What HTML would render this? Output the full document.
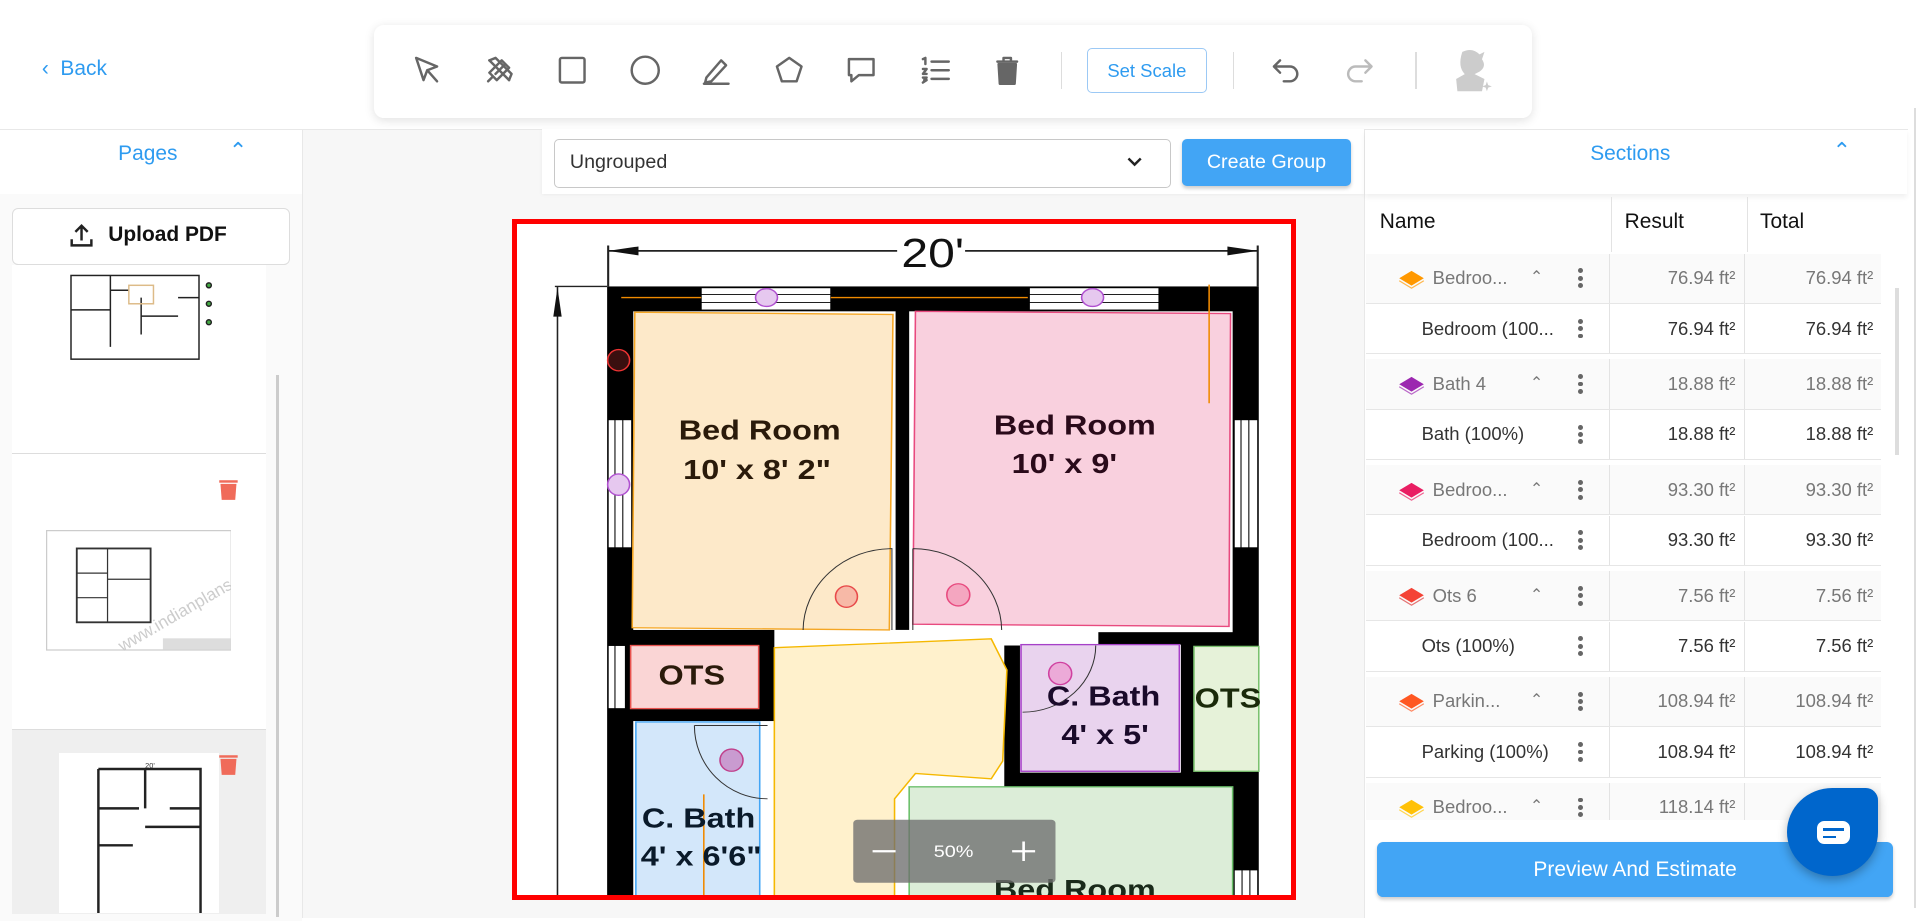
<!DOCTYPE html>
<html><head><meta charset="utf-8">
<style>
html{zoom:1.2308}
body{margin:0;width:1560px;height:735px;overflow:hidden;background:#fff;font-family:"Liberation Sans",sans-serif;position:relative}
.a{position:absolute}
.blue{color:#2e9bf0}
.ic{position:absolute;top:43px;width:28px;height:28px}
.ic svg{width:28px;height:28px;fill:none;stroke:#666;stroke-width:2;stroke-linecap:round;stroke-linejoin:round}
.row{position:absolute;left:1112px;width:418px;height:40px;font-size:15px;color:#333;border-bottom:1px solid #e6e6e6}
.row.g{background:#fafafa;color:#777}
.row .n{position:absolute;top:11px}
.row .r{position:absolute;right:118px;top:11px}
.row .t{position:absolute;right:6px;top:11px}
.row .c1{position:absolute;left:197px;top:0;height:40px;border-left:1px solid #e3e3e3}
.row .c2{position:absolute;left:307px;top:0;height:40px;border-left:1px solid #e3e3e3}
.dots{position:absolute;left:172px;top:12px;width:4px}
.dots i{display:block;width:4px;height:4px;border-radius:2px;background:#666;margin-bottom:2px}
.chev{position:absolute;left:133px;top:11px;font-size:13px;color:#777}
.lay{position:absolute;left:26px;top:10px;width:22px;height:20px}
</style></head><body>

<div class="a blue" style="left:34px;top:46px;font-size:17px">&#8249;&nbsp; Back</div>
<div class="a" style="left:304px;top:20px;width:941px;height:76px;background:#fff;border-radius:8px;box-shadow:0 2px 8px rgba(0,0,0,.12)"></div>
<div class="ic" style="left:333px"><svg viewBox="0 0 28 28"><path d="M5 4 L22 11 L14 14 L11 22 Z M14 14 L22 23"/></svg></div>
<div class="ic" style="left:392px"><svg viewBox="0 0 28 28"><path d="M6 16 L16 6 L22 12 L12 22 Z M9 19 L5 23 M18 10 L11 17 M6 6 L22 22"/><path d="M6 6 L11 4 L24 17 L22 22"/></svg></div>
<div class="ic" style="left:451px"><svg viewBox="0 0 28 28"><rect x="4" y="4" width="20" height="20" rx="1.5"/></svg></div>
<div class="ic" style="left:510px"><svg viewBox="0 0 28 28"><circle cx="14" cy="14" r="11"/></svg></div>
<div class="ic" style="left:568px"><svg viewBox="0 0 28 28"><path d="M6 20 L18 6 L22 10 L10 23 L5 24 Z M4 25 H24"/></svg></div>
<div class="ic" style="left:627px"><svg viewBox="0 0 28 28"><path d="M14 4 L24 11 L20 23 H8 L4 11 Z"/></svg></div>
<div class="ic" style="left:686px"><svg viewBox="0 0 28 28"><path d="M4 5 H24 V18 H12 L6 23 V18 H4 Z"/></svg></div>
<div class="ic" style="left:746px"><svg viewBox="0 0 28 28"><path d="M11 7 H25 M11 14 H25 M11 21 H25 M4 5 L6 4 V9 M4 13 H7 L4 17 H7 M4 20 H7 L5 22 H7 L4 24"/></svg></div>
<div class="ic" style="left:804px"><svg viewBox="0 0 28 28"><path d="M6 7 H22 M11 7 V4 H17 V7" /><path d="M7 9 H21 L20 25 H8 Z" fill="#666"/></svg></div>
<div class="a" style="left:862px;top:42px;width:1px;height:30px;background:#ddd"></div>
<div class="a blue" style="left:883px;top:39px;width:96px;height:35px;border:1px solid #9cc9f5;border-radius:4px;font-size:15px;text-align:center;line-height:35px">Set Scale</div>
<div class="a" style="left:1002px;top:42px;width:1px;height:30px;background:#ddd"></div>
<div class="ic" style="left:1031px"><svg viewBox="0 0 28 28"><path d="M9 6 L4 11 L9 16 M4 11 H17 A6 6 0 0 1 17 23 H12"/></svg></div>
<div class="ic" style="left:1090px"><svg viewBox="0 0 28 28" style="stroke:#bbb"><path d="M19 6 L24 11 L19 16 M24 11 H11 A6 6 0 0 0 11 23 H16"/></svg></div>
<div class="a" style="left:1150px;top:42px;width:1px;height:30px;background:#ddd"></div>
<svg class="a" style="left:1178px;top:38px" width="36" height="38" viewBox="0 0 36 38"><path d="M10 4 Q18 0 24 6 L28 4 L26 10 Q30 16 24 20 L20 22 L28 26 L26 36 H6 L5 26 L12 22 Q6 16 10 4Z" fill="#ccc"/><path d="M30 28 l1 3 3 1 -3 1 -1 3 -1 -3 -3 -1 3 -1z" fill="#ccc"/></svg>

<div class="a" style="left:0;top:105px;width:1550px;height:1px;background:#e8e8e8"></div>
<div class="a" style="left:1555px;top:88px;width:2px;height:650px;background:#ddd"></div>

<div class="a" style="left:0;top:106px;width:245px;height:52px;background:#fff;box-shadow:0 3px 4px rgba(0,0,0,.06)"></div>
<div class="a blue" style="left:96px;top:115px;font-size:17px">Pages</div>
<div class="a blue" style="left:186px;top:112px;font-size:18px">&#8963;</div>
<div class="a" style="left:245px;top:106px;width:1px;height:640px;background:#e8e8e8"></div>
<div class="a" style="left:0;top:158px;width:245px;height:590px;background:#fafafa"></div>
<div class="a" style="left:10px;top:169px;width:224px;height:45px;background:#fff;border:1px solid #ddd;border-radius:5px"></div>
<svg class="a" style="left:55px;top:180px" width="22" height="22" viewBox="0 0 22 22" fill="none" stroke="#222" stroke-width="2"><path d="M11 15 V3 M6 8 L11 3 L16 8 M3 14 V19 H19 V14"/></svg>
<div class="a" style="left:88px;top:181px;font-size:17px;font-weight:bold;color:#111">Upload PDF</div>
<div class="a" style="left:10px;top:215px;width:206px;height:525px;background:#fff"></div>
<div class="a" style="left:224px;top:305px;width:3px;height:440px;background:#ccc"></div>
<svg class="a" style="left:45px;top:222px" width="135" height="74" viewBox="0 0 135 74" fill="none" stroke="#222" stroke-width="1.2"><rect x="13" y="2" width="104" height="68"/><path d="M13 30 H45 M45 2 V60 M45 14 H60 M70 20 V50 M100 20 H117 M70 35 H100"/><circle cx="125" cy="10" r="2" fill="#4a4"/><circle cx="125" cy="25" r="2" fill="#4a4"/><circle cx="125" cy="40" r="2" fill="#4a4"/><rect x="60" y="10" width="20" height="15" stroke="#db8"/></svg>
<div class="a" style="left:10px;top:368px;width:206px;height:1px;background:#ddd"></div>
<svg class="a" style="left:177px;top:389px" width="17" height="18" viewBox="0 0 17 18"><rect x="1" y="1" width="15" height="2" fill="#f06b5a"/><path d="M2 4 H15 L14 17 H3Z" fill="#f06b5a"/></svg>
<svg class="a" style="left:37px;top:431px" width="151" height="98" viewBox="0 0 151 98" fill="none" stroke="#333" stroke-width="1"><rect x=".5" y=".5" width="150" height="97" stroke="#ccc"/><rect x="25" y="15" width="60" height="60" stroke-width="1.5"/><path d="M25 35 H50 M50 15 V75 M25 55 H50 M50 40 H85"/><text x="45" y="85" font-size="14" fill="#ccc" stroke="none" transform="rotate(-30 80 60)">www.indianplans.in</text><rect x="95" y="88" width="55" height="9" fill="#ddd" stroke="none"/></svg>
<div class="a" style="left:10px;top:592px;width:206px;height:150px;background:#efefef;border-top:1px solid #ddd"></div>
<div class="a" style="left:48px;top:612px;width:130px;height:130px;background:#fff"></div>
<svg class="a" style="left:48px;top:612px" width="130" height="130" viewBox="0 0 130 130" fill="none" stroke="#222" stroke-width="2"><path d="M32 13 H115 V130 M32 13 V130 M32 45 H65 M70 13 V45 M90 45 H115 M70 60 H115 M32 75 H60"/><text x="70" y="12" font-size="6" fill="#333" stroke="none">20'</text></svg>
<svg class="a" style="left:177px;top:613px" width="17" height="18" viewBox="0 0 17 18"><rect x="1" y="1" width="15" height="2" fill="#f06b5a"/><path d="M2 4 H15 L14 17 H3Z" fill="#f06b5a"/></svg>

<div class="a" style="left:246px;top:106px;width:862px;height:640px;background:#f7f7f7"></div>
<div class="a" style="left:440px;top:105px;width:668px;height:53px;background:#fff;box-shadow:0 1px 3px rgba(0,0,0,.06)"></div>
<div class="a" style="left:450px;top:113px;width:500px;height:38px;border:1px solid #c8c8c8;border-radius:4px;background:#fff"></div>
<div class="a" style="left:463px;top:123px;font-size:16px;color:#333">Ungrouped</div>
<svg class="a" style="left:915px;top:127px" width="14" height="10" viewBox="0 0 14 10" fill="none" stroke="#222" stroke-width="2"><path d="M2 2 L7 7 L12 2"/></svg>
<div class="a" style="left:960px;top:113px;width:138px;height:38px;background:#42a5f5;border-radius:4px;color:#fff;font-size:16px;text-align:center;line-height:38px;box-shadow:0 2px 3px rgba(0,0,0,.2)">Create Group</div>

<div class="a" style="left:416px;top:178px;width:637px;height:553px;background:#fff;overflow:hidden">
<svg class="a" style="left:-9.75px;top:-7.4px" width="658.1" height="564.7" viewBox="0 0 1550 1564" preserveAspectRatio="none" font-family="Liberation Sans, sans-serif">
<path d="M207 92 H760 M890 92 H1450 M207 80 V172 M1450 80 V172" stroke="#222" stroke-width="4" fill="none"/>
<path d="M207 92 L265 82 L265 102Z M1450 92 L1392 82 L1392 102Z" fill="#111"/>
<text x="828" y="128" font-size="92" text-anchor="middle" fill="#111">20'</text>
<path d="M105 172 H205 M110 172 V1600" stroke="#222" stroke-width="3"/>
<path d="M110 175 L102 240 L118 240Z" fill="#111"/>
<rect x="205" y="172" width="1247" height="1450" fill="#000"/>
<g fill="#fff" stroke="#000" stroke-width="2">
<rect x="385" y="175" width="248" height="50"/><rect x="1013" y="175" width="248" height="50"/>
<rect x="207" y="472" width="45" height="288"/><rect x="1405" y="472" width="45" height="288"/>
<rect x="207" y="980" width="33" height="142"/><rect x="1405" y="1485" width="45" height="100"/>
</g>
<path d="M385 190 H633 M385 208 H633 M1013 190 H1261 M1013 208 H1261" stroke="#000" stroke-width="2"/>
<path d="M220 472 V760 M235 472 V760 M1418 472 V760 M1433 472 V760 M220 980 V1122 M1420 1485 V1590 M1435 1485 V1590" stroke="#000" stroke-width="2"/>
<rect x="255" y="228" width="502" height="717" fill="#fff"/>
<rect x="783" y="228" width="619" height="722" fill="#fff"/>
<rect x="525" y="945" width="440" height="640" fill="#fff"/>
<rect x="580" y="945" width="565" height="35" fill="#fff"/>
<rect x="255" y="1150" width="270" height="440" fill="#fff"/>
<rect x="995" y="978" width="308" height="288" fill="#fff"/>
<rect x="783" y="1298" width="619" height="290" fill="#fff"/>
<polygon points="258,230 752,235 745,945 253,940" fill="#fde9c9" stroke="#f5a623" stroke-width="3"/>
<polygon points="795,228 1398,233 1395,937 790,932" fill="#f9d0de" stroke="#e84a7f" stroke-width="3"/>
<rect x="250" y="980" width="245" height="142" fill="#fad5d5" stroke="#e8534f" stroke-width="3"/>
<polygon points="525,985 940,965 970,1035 962,1240 940,1280 795,1268 755,1325 755,1600 525,1600" fill="#fff1cc" stroke="#f5b800" stroke-width="3"/>
<rect x="997" y="978" width="303" height="285" fill="#e9d3ee" stroke="#a640c8" stroke-width="3"/>
<rect x="1328" y="982" width="124" height="281" fill="#e6f2d9" stroke="#7bc26f" stroke-width="3"/>
<rect x="783" y="1298" width="619" height="300" fill="#dcedd8" stroke="#6abf69" stroke-width="3"/>
<rect x="260" y="1152" width="237" height="450" fill="#d3e7fa" stroke="#42a5f5" stroke-width="3"/>
<g fill="none" stroke="#333" stroke-width="2">
<path d="M580 945 A170 185 0 0 1 750 762 V945"/><path d="M790 762 A170 185 0 0 1 960 945 M790 762 V945"/>
<path d="M1000 1130 A140 150 0 0 0 1140 980"/><path d="M372 1160 A140 165 0 0 0 512 1325 M372 1160 H512"/>
</g>
<path d="M232 197 H385 M633 197 H1010 M1357 168 V435 M390 1315 V1600" stroke="#f08a00" stroke-width="3"/>
<g stroke-width="3">
<ellipse cx="510" cy="197" rx="21" ry="20" fill="#e6c8ef" stroke="#b050d0"/><ellipse cx="1134" cy="197" rx="21" ry="20" fill="#e6c8ef" stroke="#b050d0"/>
<ellipse cx="227" cy="338" rx="21" ry="24" fill="#3a0f0f" stroke="#e33"/><ellipse cx="227" cy="618" rx="21" ry="24" fill="#e6c8ef" stroke="#b050d0"/>
<ellipse cx="663" cy="870" rx="21" ry="24" fill="#f7b9a7" stroke="#e84a4a"/><ellipse cx="877" cy="866" rx="22" ry="25" fill="#f4a6c0" stroke="#e84a7f"/>
<ellipse cx="1072" cy="1043" rx="22" ry="25" fill="#ecaad8" stroke="#d040a0"/><ellipse cx="443" cy="1238" rx="22" ry="25" fill="#c99bd0" stroke="#c0408c"/>
</g>
<g font-weight="bold" font-size="62" fill="#2a1a0a" text-anchor="middle">
<text x="497" y="517">Bed Room</text><text x="492" y="605">10' x 8' 2"</text>
<text x="1100" y="505" fill="#2a0a1a">Bed Room</text><text x="1080" y="592" fill="#2a0a1a">10' x 9'</text>
<text x="367" y="1068">OTS</text>
<text x="1155" y="1115" fill="#1a0a2a">C. Bath</text><text x="1158" y="1202" fill="#1a0a2a">4' x 5'</text>
<text x="1393" y="1120" fill="#1a2a0a">OTS</text>
<text x="380" y="1390" fill="#0a1a2a">C. Bath</text><text x="385" y="1475" fill="#0a1a2a">4' x 6'6"</text>
<text x="1100" y="1550" fill="#1a2a1a">Bed Room</text>
</g>
<rect x="676" y="1372" width="387" height="142" rx="8" fill="rgba(110,110,110,.78)"/>
<path d="M713 1443 H757 M980 1443 H1024 M1002 1421 V1465" stroke="#fff" stroke-width="5"/>
<text x="868" y="1456" font-size="38" fill="#fff" text-anchor="middle">50%</text>
</svg>
</div>
<div class="a" style="left:416px;top:727px;width:637px;height:4px;background:#f00"></div>
<div class="a" style="left:416px;top:178px;width:4px;height:553px;background:#f00"></div>
<div class="a" style="left:1049px;top:178px;width:4px;height:553px;background:#f00"></div>
<div class="a" style="left:416px;top:178px;width:637px;height:4px;background:#f00"></div>

<div class="a" style="left:1108px;top:106px;width:1px;height:640px;background:#e8e8e8"></div>
<div class="a" style="left:1109px;top:106px;width:440px;height:52px;background:#fff;box-shadow:0 3px 4px rgba(0,0,0,.06)"></div>
<div class="a blue" style="left:1292px;top:115px;font-size:17px">Sections</div>
<div class="a blue" style="left:1489px;top:112px;font-size:18px">&#8963;</div>
<div class="a" style="left:1121px;top:171px;font-size:17px;color:#111">Name</div>
<div class="a" style="left:1320px;top:171px;font-size:17px;color:#111">Result</div>
<div class="a" style="left:1430px;top:171px;font-size:17px;color:#111">Total</div>
<div class="a" style="left:1309px;top:160px;width:1px;height:45px;background:#e3e3e3"></div>
<div class="a" style="left:1419px;top:160px;width:1px;height:45px;background:#e3e3e3"></div>
<div class="a" style="left:1540px;top:234px;width:3px;height:136px;background:#ddd"></div>

<div class="a" style="left:1110px;top:206px;width:422px;height:460px;overflow:hidden">
<div style="position:relative;left:-1112px">
<div class="row g" style="top:0"><svg class="lay" viewBox="0 0 22 20"><path d="M1 10 L11 16 L21 10 L11 4Z" fill="#ff9800"/><path d="M1 12 L11 18 L21 12" fill="none" stroke="#ffb74d"/></svg><span class="n" style="left:54px">Bedroo...</span><span class="chev">&#8963;</span><div class="dots"><i></i><i></i><i></i></div><div class="c1"></div><div class="c2"></div><span class="r">76.94 ft²</span><span class="t">76.94 ft²</span></div>
<div class="row" style="top:41px"><span class="n" style="left:45px">Bedroom (100...</span><div class="dots"><i></i><i></i><i></i></div><div class="c1"></div><div class="c2"></div><span class="r">76.94 ft²</span><span class="t">76.94 ft²</span></div>
<div class="row g" style="top:86px"><svg class="lay" viewBox="0 0 22 20"><path d="M1 10 L11 16 L21 10 L11 4Z" fill="#9c27b0"/><path d="M1 12 L11 18 L21 12" fill="none" stroke="#ba68c8"/></svg><span class="n" style="left:54px">Bath 4</span><span class="chev">&#8963;</span><div class="dots"><i></i><i></i><i></i></div><div class="c1"></div><div class="c2"></div><span class="r">18.88 ft²</span><span class="t">18.88 ft²</span></div>
<div class="row" style="top:127px"><span class="n" style="left:45px">Bath (100%)</span><div class="dots"><i></i><i></i><i></i></div><div class="c1"></div><div class="c2"></div><span class="r">18.88 ft²</span><span class="t">18.88 ft²</span></div>
<div class="row g" style="top:172px"><svg class="lay" viewBox="0 0 22 20"><path d="M1 10 L11 16 L21 10 L11 4Z" fill="#e91e63"/><path d="M1 12 L11 18 L21 12" fill="none" stroke="#f06292"/></svg><span class="n" style="left:54px">Bedroo...</span><span class="chev">&#8963;</span><div class="dots"><i></i><i></i><i></i></div><div class="c1"></div><div class="c2"></div><span class="r">93.30 ft²</span><span class="t">93.30 ft²</span></div>
<div class="row" style="top:213px"><span class="n" style="left:45px">Bedroom (100...</span><div class="dots"><i></i><i></i><i></i></div><div class="c1"></div><div class="c2"></div><span class="r">93.30 ft²</span><span class="t">93.30 ft²</span></div>
<div class="row g" style="top:258px"><svg class="lay" viewBox="0 0 22 20"><path d="M1 10 L11 16 L21 10 L11 4Z" fill="#f44336"/><path d="M1 12 L11 18 L21 12" fill="none" stroke="#e57373"/></svg><span class="n" style="left:54px">Ots 6</span><span class="chev">&#8963;</span><div class="dots"><i></i><i></i><i></i></div><div class="c1"></div><div class="c2"></div><span class="r">7.56 ft²</span><span class="t">7.56 ft²</span></div>
<div class="row" style="top:299px"><span class="n" style="left:45px">Ots (100%)</span><div class="dots"><i></i><i></i><i></i></div><div class="c1"></div><div class="c2"></div><span class="r">7.56 ft²</span><span class="t">7.56 ft²</span></div>
<div class="row g" style="top:344px"><svg class="lay" viewBox="0 0 22 20"><path d="M1 10 L11 16 L21 10 L11 4Z" fill="#ff5722"/><path d="M1 12 L11 18 L21 12" fill="none" stroke="#ff8a65"/></svg><span class="n" style="left:54px">Parkin...</span><span class="chev">&#8963;</span><div class="dots"><i></i><i></i><i></i></div><div class="c1"></div><div class="c2"></div><span class="r">108.94 ft²</span><span class="t">108.94 ft²</span></div>
<div class="row" style="top:385px"><span class="n" style="left:45px">Parking (100%)</span><div class="dots"><i></i><i></i><i></i></div><div class="c1"></div><div class="c2"></div><span class="r">108.94 ft²</span><span class="t">108.94 ft²</span></div>
<div class="row g" style="top:430px"><svg class="lay" viewBox="0 0 22 20"><path d="M1 10 L11 16 L21 10 L11 4Z" fill="#ffc107"/><path d="M1 12 L11 18 L21 12" fill="none" stroke="#ffd54f"/></svg><span class="n" style="left:54px">Bedroo...</span><span class="chev">&#8963;</span><div class="dots"><i></i><i></i><i></i></div><div class="c1"></div><div class="c2"></div><span class="r">118.14 ft²</span></div>
</div></div>

<div class="a" style="left:1119px;top:684px;width:419px;height:45px;background:#42a5f5;border-radius:5px;color:#fff;font-size:17px;text-align:center;line-height:45px;box-shadow:0 2px 3px rgba(0,0,0,.2)">Preview And Estimate</div>
<div class="a" style="left:1452px;top:640px;width:74px;height:72px;background:#0066cc;border-radius:50% 10px 50% 50%;box-shadow:0 3px 8px rgba(0,0,0,.3)"></div>
<div class="a" style="left:1476px;top:667px;width:27px;height:19px;background:#fff;border-radius:6px"></div>
<div class="a" style="left:1481px;top:673px;width:17px;height:2px;background:#0066cc"></div>
<div class="a" style="left:1481px;top:679px;width:11px;height:2px;background:#0066cc"></div>
</body></html>
